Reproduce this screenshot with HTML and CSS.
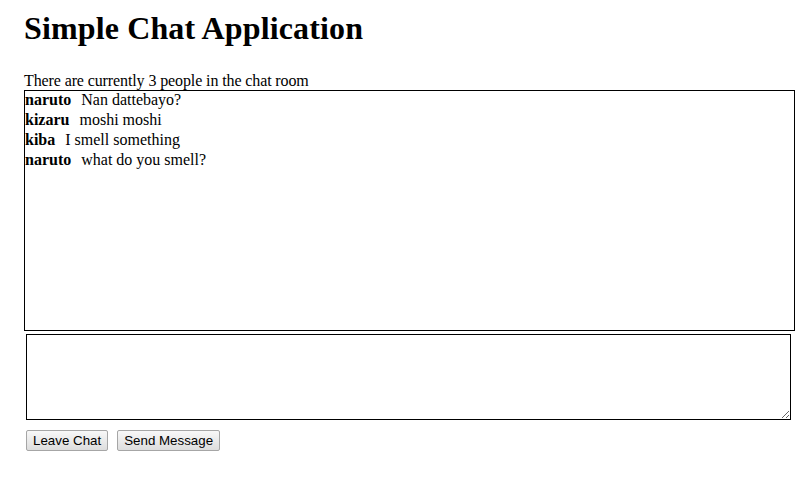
FILE: index.html
```html
<!DOCTYPE html>
<html>
<head>
<meta charset="utf-8">
<title>Simple Chat Application</title>
<link rel="stylesheet" href="styles.css">
</head>
<body>
<div class="page">
  <h1 class="title">Simple Chat Application</h1>
  <div class="status">There are currently 3 people in the chat room</div>
  <div class="chat">
    <div class="msg"><b class="user">naruto</b> Nan dattebayo?</div>
    <div class="msg"><b class="user">kizaru</b> moshi moshi</div>
    <div class="msg"><b class="user">kiba</b> I smell something</div>
    <div class="msg"><b class="user">naruto</b> what do you smell?</div>
  </div>
  <textarea class="input"></textarea>
  <div class="actions">
    <button class="btn" type="button">Leave Chat</button>
    <button class="btn" type="button">Send Message</button>
  </div>
</div>
</body>
</html>
```

FILE: styles.css
```css
html, body {
  margin: 0;
  padding: 0;
  background: #fff;
}

body {
  font-family: "Liberation Serif", "Times New Roman", serif;
  font-size: 16px;
  color: #000;
}

.page {
  padding: 0 24px;
}

.title {
  margin: 10px 0 24px;
  font-size: 32px;
  font-weight: bold;
  line-height: 37px;
  letter-spacing: 0.13px;
}

.status {
  line-height: 19px;
  letter-spacing: -0.11px;
}

.chat {
  box-sizing: border-box;
  width: 771px;
  height: 241px;
  border: 1px solid #000;
  overflow: auto;
}

.msg {
  line-height: 18.4px;
  padding-top: 0.4px;
  padding-bottom: 1.2px;
}

.user {
  margin-right: 6px;
}

.input {
  display: block;
  box-sizing: border-box;
  width: 765px;
  height: 86px;
  margin: 3px 0 0 2px;
  padding: 2px;
  border: 1px solid #000;
  font-family: "Liberation Mono", monospace;
  font-size: 13px;
}

.actions {
  display: flex;
  gap: 9px;
  margin: 10px 0 0 2px;
}

.btn {
  box-sizing: border-box;
  height: 21px;
  padding: 1px 6px;
  border: 1px solid #a6a6a6;
  border-radius: 2px;
  background: linear-gradient(#f8f8f8, #dddddd);
  font-family: "Liberation Sans", Arial, sans-serif;
  font-size: 13.333px;
  color: #000;
  line-height: 16px;
}
```
